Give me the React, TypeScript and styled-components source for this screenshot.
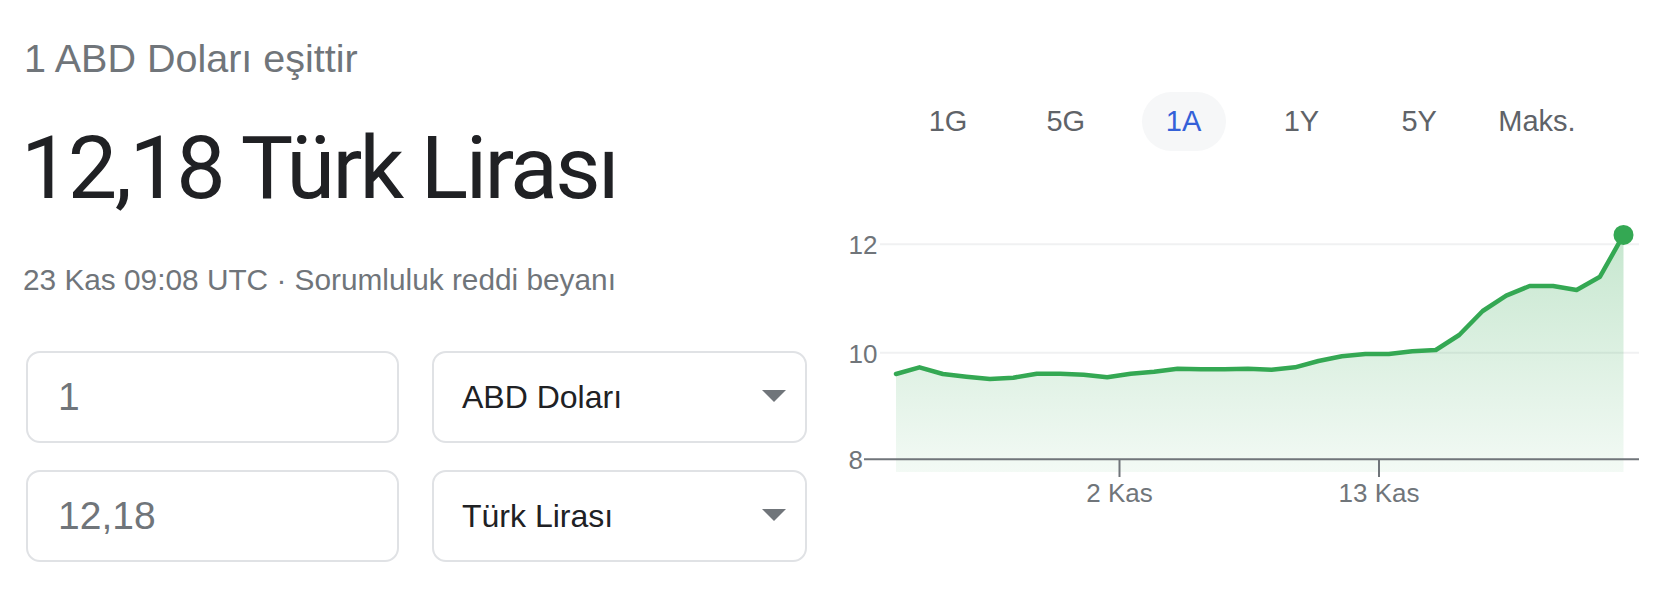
import React from "react";
import styled, { createGlobalStyle } from "styled-components";

const GlobalStyle = createGlobalStyle`
  html, body {
    margin: 0;
    padding: 0;
    background: #ffffff;
  }
  body {
    font-family: "Liberation Sans", Arial, sans-serif;
    -webkit-font-smoothing: antialiased;
  }
  * { box-sizing: border-box; }
`;

const Page = styled.div`
  display: flex;
  align-items: flex-start;
  width: 1674px;
  height: 612px;
  padding-left: 23px;
  overflow: hidden;
`;

const LeftColumn = styled.section`
  display: flex;
  flex-direction: column;
  width: 784px;
  flex: none;
`;

const Heading = styled.div`
  margin-top: 35px;
  margin-left: 1px;
  font-size: 39.5px;
  line-height: 46px;
  color: #70757a;
  white-space: nowrap;
`;

const BigValue = styled.div`
  margin-top: 37px;
  margin-left: -2px;
  font-family: Roboto, "Liberation Sans", Arial, sans-serif;
  font-size: 88px;
  line-height: 100px;
  letter-spacing: -2.6px;
  color: #202124;
  white-space: nowrap;
`;

const DateLine = styled.div`
  margin-top: 45px;
  font-size: 29.8px;
  line-height: 34px;
  color: #70757a;
  white-space: nowrap;
`;

const ConverterGrid = styled.div`
  margin: 54px 0 0 3px;
  display: grid;
  grid-template-columns: 373px 375px;
  grid-auto-rows: 92px;
  column-gap: 33px;
  row-gap: 27px;
`;

const AmountInput = styled.input`
  width: 100%;
  height: 100%;
  border: 2px solid #e0e2e5;
  border-radius: 14px;
  padding: 0 0 0 30px;
  margin: 0;
  font-family: "Liberation Sans", Arial, sans-serif;
  font-size: 39px;
  color: #70757a;
  background: #ffffff;
  outline: none;
`;

const CurrencySelect = styled.div`
  display: flex;
  align-items: center;
  justify-content: space-between;
  height: 100%;
  border: 2px solid #e0e2e5;
  border-radius: 14px;
  padding: 0 19px 0 28px;
  font-size: 32px;
  color: #202124;
  background: #ffffff;
  cursor: pointer;
`;

const Caret = styled.span`
  width: 0;
  height: 0;
  border-left: 12px solid transparent;
  border-right: 12px solid transparent;
  border-top: 12px solid #70757a;
  margin-top: -2px;
`;

const RightColumn = styled.section`
  display: flex;
  flex-direction: column;
  margin-left: 23px;
  flex: 1;
`;

const TabsRow = styled.div`
  display: flex;
  gap: 33.8px;
  margin-top: 92px;
  padding-left: 76px;
`;

const Tab = styled.div<{ $active?: boolean }>`
  width: 84px;
  height: 59px;
  border-radius: 30px;
  display: flex;
  align-items: center;
  justify-content: center;
  font-size: 29px;
  white-space: nowrap;
  color: ${(p) => (p.$active ? "#3461d8" : "#5f6368")};
  background: ${(p) => (p.$active ? "#f6f7f8" : "transparent")};
`;

const ChartSvg = styled.svg`
  display: block;
  margin-top: 49px;
  width: 844px;
  height: 320px;
`;

const rates = [
  9.587, 9.712, 9.587, 9.537, 9.494, 9.518, 9.593, 9.593, 9.574, 9.526, 9.593,
  9.63, 9.686, 9.674, 9.674, 9.686, 9.667, 9.712, 9.829, 9.916, 9.959, 9.959,
  10.009, 10.033, 10.312, 10.759, 11.044, 11.224, 11.224, 11.15, 11.397, 12.175,
];

const X0 = 896;
const X1 = 1623.5;
const yOf = (v: number) => 459.3 - (v - 8) * 53.75;
const xOf = (i: number) => X0 + ((X1 - X0) * i) / (rates.length - 1);

const pts = rates.map((v, i) => [xOf(i), yOf(v)] as const);
const linePath = pts.map(([x, y], i) => `${i ? "L" : "M"}${x.toFixed(1)} ${y.toFixed(1)}`).join(" ");
const areaPath = `${linePath} L${X1} 472 L${X0} 472 Z`;

const Chart: React.FC = () => (
  <ChartSvg viewBox="830 200 844 320">
    <defs>
      <linearGradient id="areaFill" gradientUnits="userSpaceOnUse" x1="0" y1="236" x2="0" y2="472">
        <stop offset="0" stopColor="#34a853" stopOpacity="0.28" />
        <stop offset="1" stopColor="#34a853" stopOpacity="0.06" />
      </linearGradient>
    </defs>
    <line x1="880" y1="244.3" x2="1639" y2="244.3" stroke="#f0f1f2" strokeWidth="2" />
    <line x1="880" y1="352.7" x2="1639" y2="352.7" stroke="#f0f1f2" strokeWidth="2" />
    <path d={areaPath} fill="url(#areaFill)" />
    <line x1="864" y1="459.3" x2="1639" y2="459.3" stroke="#70757a" strokeWidth="2" />
    <line x1="1119.5" y1="459" x2="1119.5" y2="477" stroke="#70757a" strokeWidth="2" />
    <line x1="1379" y1="459" x2="1379" y2="477" stroke="#70757a" strokeWidth="2" />
    <path d={linePath} fill="none" stroke="#34a853" strokeWidth="4.5" strokeLinejoin="round" strokeLinecap="round" />
    <circle cx={X1} cy={yOf(12.175)} r="10" fill="#34a853" />
    <g fontFamily="'Liberation Sans', Arial, sans-serif" fontSize="26" fill="#70757a">
      <text x="848.5" y="254">12</text>
      <text x="848.5" y="362.5">10</text>
      <text x="848.5" y="468.8">8</text>
      <text x="1119.5" y="501.5" textAnchor="middle">2 Kas</text>
      <text x="1379" y="501.5" textAnchor="middle">13 Kas</text>
    </g>
  </ChartSvg>
);

const tabs = ["1G", "5G", "1A", "1Y", "5Y", "Maks."];

export default function App() {
  return (
    <>
      <GlobalStyle />
      <Page>
        <LeftColumn>
          <Heading>1 ABD Doları eşittir</Heading>
          <BigValue>12,18 Türk Lirası</BigValue>
          <DateLine>23 Kas 09:08 UTC · Sorumluluk reddi beyanı</DateLine>
          <ConverterGrid>
            <AmountInput type="text" defaultValue="1" readOnly />
            <CurrencySelect>
              <span>ABD Doları</span>
              <Caret />
            </CurrencySelect>
            <AmountInput type="text" defaultValue="12,18" readOnly />
            <CurrencySelect>
              <span>Türk Lirası</span>
              <Caret />
            </CurrencySelect>
          </ConverterGrid>
        </LeftColumn>
        <RightColumn>
          <TabsRow>
            {tabs.map((t) => (
              <Tab key={t} $active={t === "1A"}>
                {t}
              </Tab>
            ))}
          </TabsRow>
          <Chart />
        </RightColumn>
      </Page>
    </>
  );
}
